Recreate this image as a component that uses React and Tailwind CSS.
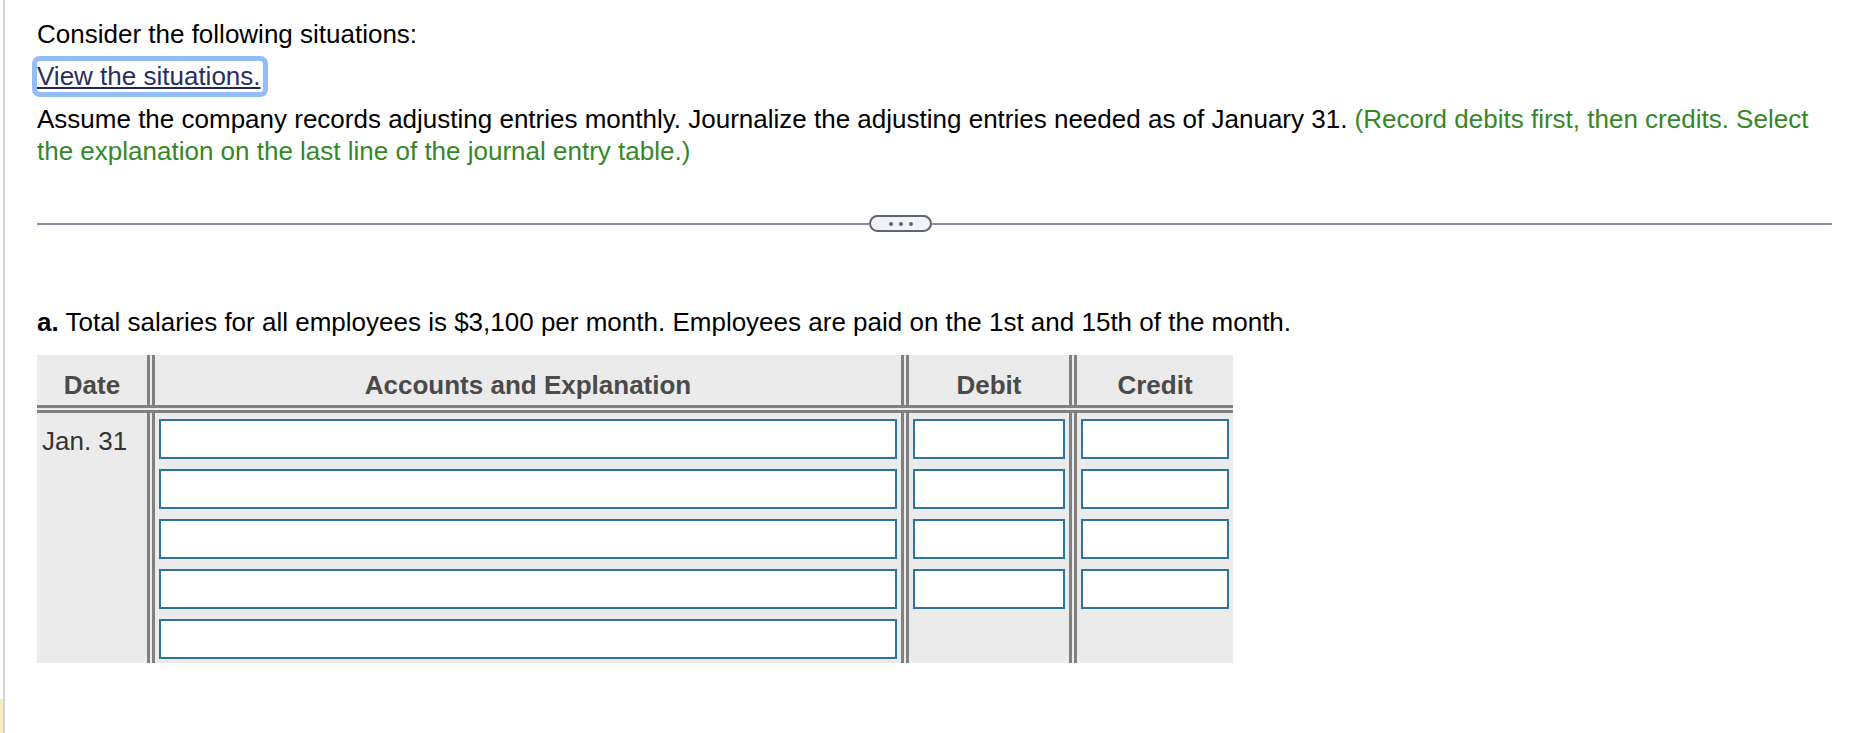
// App.jsx — journal entry question (adjusting entries)
const ROWS = [0, 1, 2, 3, 4];

function VSep() {
    return (
        <div className="flex w-[8px] shrink-0 self-stretch">
            <div className="w-[3px] bg-[#808080]" />
            <div className="w-[2px]" />
            <div className="w-[3px] bg-[#808080]" />
        </div>
    );
}

function Field({ w }) {
    return <input type="text" className={`${w} h-[40px] border-2 border-[#2e7499] bg-white outline-none`} />;
}

export default function App() {
    return (
        <div className="flex min-h-screen bg-white text-black font-['Liberation_Sans',Arial,sans-serif] text-[26px]">
            <div className="flex w-[3px] shrink-0 flex-col">
                <div className="flex-1" />
                <div className="h-[34px] bg-[#f8ebbf]" />
            </div>
            <div className="w-[2px] shrink-0 bg-[#cfd3dc]" />

            <div className="flex-1 pl-[32px] pr-[21px]">
                <p className="mt-[18px] leading-[32px]">Consider the following situations:</p>

                <div className="mt-[11px] flex">
                    <a href="#" className="h-[31px] pr-[2px] leading-[31px] text-[#262f63] underline decoration-2 underline-offset-[2px] decoration-[#1f2858] rounded-[3px] shadow-[0_0_0_5px_#93bdf6]">
                        View the situations.
                    </a>
                </div>

                <p className="mt-[11px] leading-[32px]">
                    Assume the company records adjusting entries monthly. Journalize the adjusting entries needed as of January 31.{" "}
                    <span className="text-[#368727]">(Record debits first, then credits. Select the explanation on the last line of the journal entry table.)</span>
                </p>

                <div className="mt-[48px] flex h-[17px] items-center">
                    <div className="h-[2px] w-[832px] bg-[#8a8e9f]" />
                    <button className="flex h-[17px] w-[63px] items-center justify-center gap-[6px] rounded-full border-2 border-[#5d6570] bg-[#f0f2f5]">
                        <span className="h-[4px] w-[4px] rounded-full bg-[#5d6570]" />
                        <span className="h-[4px] w-[4px] rounded-full bg-[#5d6570]" />
                        <span className="h-[4px] w-[4px] rounded-full bg-[#5d6570]" />
                    </button>
                    <div className="h-[2px] flex-1 bg-[#8a8e9f]" />
                </div>

                <p className="mt-[74px] leading-[32px]">
                    <span className="font-bold">a.</span> Total salaries for all employees is $3,100 per month. Employees are paid on the 1st and 15th of the month.
                </p>

                <div className="mt-[17px] w-[1196px] bg-[#ebebeb]">
                    <div className="flex h-[50px] font-bold text-[#4a4a4a]">
                        <div className="w-[110px] pt-[14px] text-center leading-[32px]">Date</div>
                        <VSep />
                        <div className="w-[746px] pt-[14px] text-center leading-[32px]">Accounts and Explanation</div>
                        <VSep />
                        <div className="w-[160px] pt-[14px] text-center leading-[32px]">Debit</div>
                        <VSep />
                        <div className="w-[156px] pt-[14px] text-center leading-[32px]">Credit</div>
                    </div>

                    <div className="flex h-[8px] flex-col">
                        <div className="h-[3px] bg-[#808080]" />
                        <div className="h-[2px]" />
                        <div className="h-[3px] bg-[#808080]" />
                    </div>

                    <div className="flex">
                        <div className="w-[110px] pl-[5px] pt-[12px] leading-[32px] text-[#333333]">Jan. 31</div>
                        <VSep />
                        <div className="flex w-[746px] flex-col">
                            {ROWS.map(r => (
                                <div key={r} className="h-[50px] px-[4px] pt-[6px]">
                                    <Field w="w-full" />
                                </div>
                            ))}
                        </div>
                        <VSep />
                        <div className="flex w-[160px] flex-col">
                            {ROWS.slice(0, 4).map(r => (
                                <div key={r} className="h-[50px] px-[4px] pt-[6px]">
                                    <Field w="w-full" />
                                </div>
                            ))}
                        </div>
                        <VSep />
                        <div className="flex w-[156px] flex-col">
                            {ROWS.slice(0, 4).map(r => (
                                <div key={r} className="h-[50px] px-[4px] pt-[6px]">
                                    <Field w="w-full" />
                                </div>
                            ))}
                        </div>
                    </div>
                </div>
            </div>
        </div>
    );
}
